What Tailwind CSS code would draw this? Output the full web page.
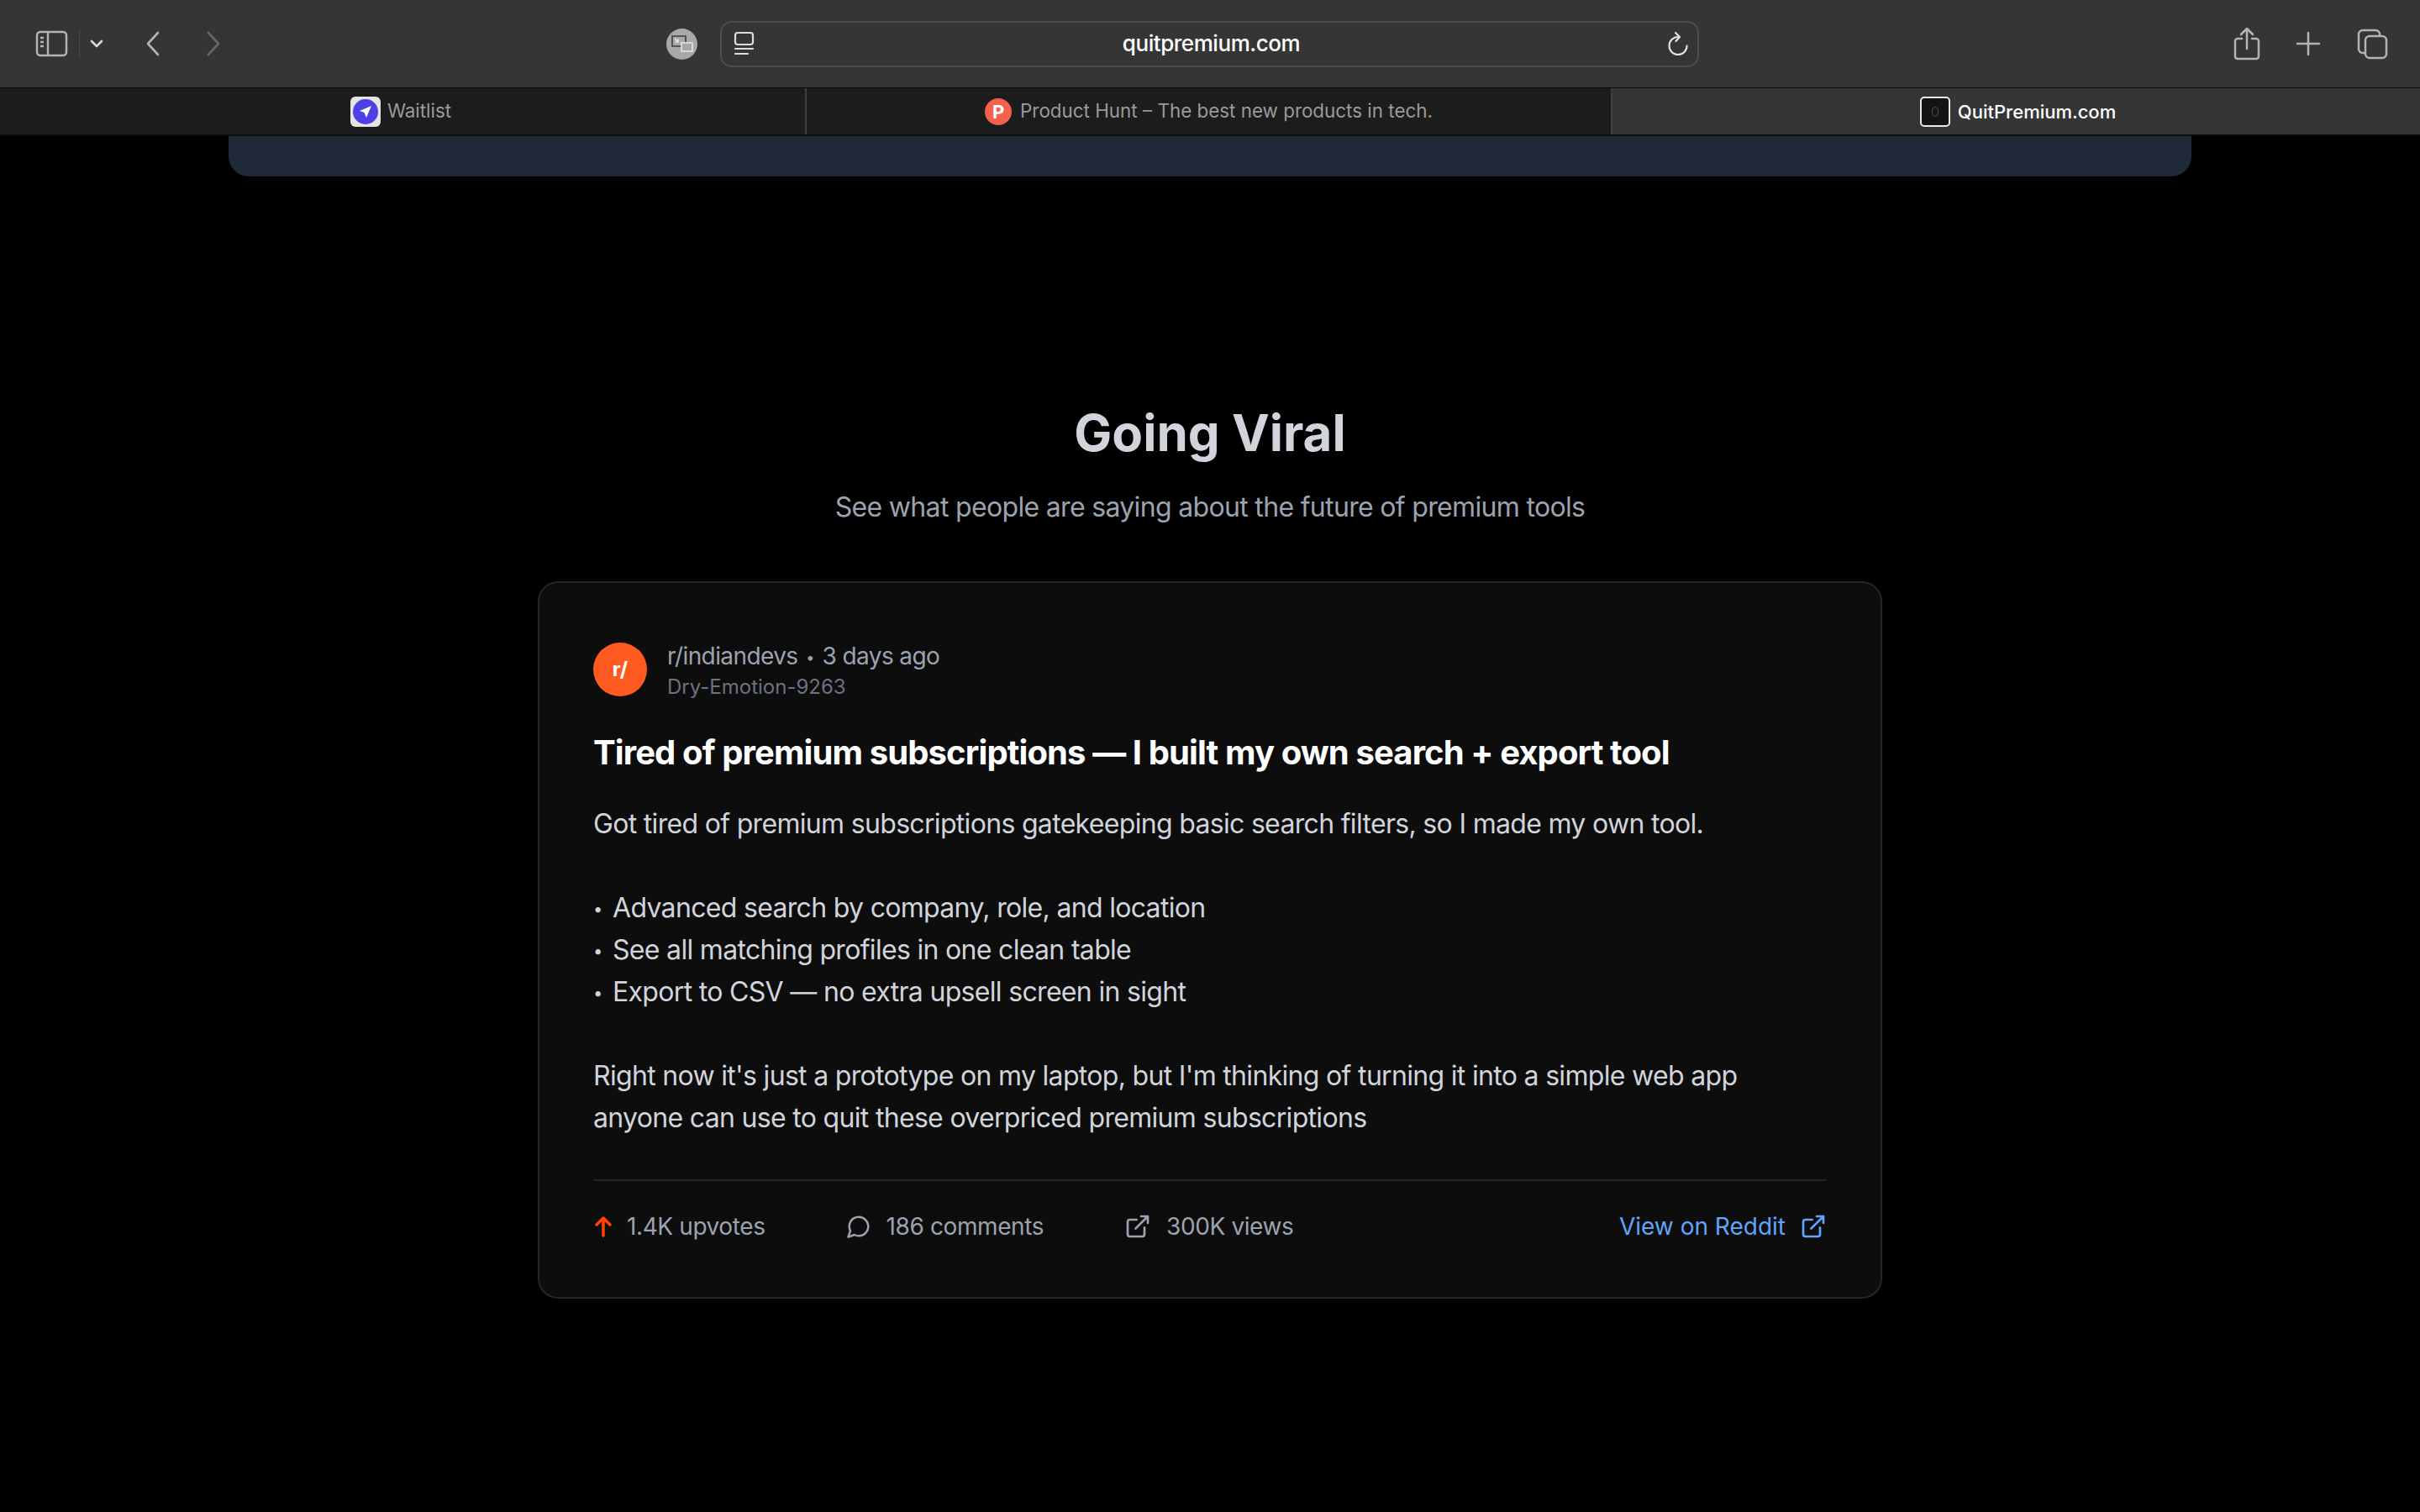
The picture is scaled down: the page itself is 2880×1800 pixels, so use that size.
<!DOCTYPE html>
<html lang="en">
<head>
    <meta charset="UTF-8">
    <meta name="viewport" content="width=device-width, initial-scale=1.0">
    <script src="https://cdn.jsdelivr.net/npm/@tailwindcss/browser@4"></script>
    <title>QuitPremium.com</title>
</head>
<body class="bg-black h-screen overflow-hidden flex flex-col [font-family:Inter,sans-serif]">

    <!-- browser toolbar -->
    <header class="h-[105px] shrink-0 bg-[#353535] border-b border-[#0c0c0c] grid grid-cols-[857px_1165px_1fr] items-center">
        <div class="flex items-center h-full pl-[42px] relative">
            <svg class="w-[39px] h-[32px]" viewBox="0 0 39 32" fill="none" stroke="#b4b4b4" stroke-width="2.5">
                <rect x="2" y="2" width="35" height="28" rx="4"/>
                <path d="M15 2v28M6 9h4M6 14h4M6 19h4"/>
            </svg>
            <div class="w-px h-[34px] bg-[#4a4a4a] ml-[13px]"></div>
            <svg class="w-[16px] h-[10px] ml-[12px]" viewBox="0 0 16 10" fill="none" stroke="#d8d8d8" stroke-width="2.6" stroke-linecap="round" stroke-linejoin="round">
                <path d="M2 2l6 6 6-6"/>
            </svg>
            <svg class="w-[18px] h-[30px] ml-[50px]" viewBox="0 0 18 30" fill="none" stroke="#b4b4b4" stroke-width="2.6" stroke-linecap="round" stroke-linejoin="round">
                <path d="M15 2L3 15l12 13"/>
            </svg>
            <svg class="w-[18px] h-[30px] ml-[54px]" viewBox="0 0 18 30" fill="none" stroke="#696969" stroke-width="2.6" stroke-linecap="round" stroke-linejoin="round">
                <path d="M3 2l12 13L3 28"/>
            </svg>
            <div class="ml-auto mr-[27px] w-[37px] h-[37px] rounded-full bg-[#a8a8a8] flex items-center justify-center">
                <svg class="w-[27px] h-[22px]" viewBox="0 0 27 22" fill="none" stroke="#3c3c3c" stroke-width="1.6">
                    <path d="M14 14H2V2h16v7"/>
                    <path d="M5 5l4 4M9 5.500V9H5.500" stroke="#e4e4e4"/>
                    <rect x="13" y="10" width="13" height="10" fill="#a8a8a8" stroke="#e4e4e4"/>
                </svg>
            </div>
        </div>

        <div class="h-[55px] rounded-[14px] border-2 border-[#4d4d4d] flex items-center pl-[14px] pr-[10px]">
            <svg class="w-[26px] h-[30px] shrink-0" viewBox="0 0 26 30" fill="none" stroke="#dcdcdc" stroke-width="2.2" stroke-linecap="round">
                <rect x="2" y="2" width="21" height="14" rx="3"/>
                <path d="M2 21h21M2 27h15"/>
            </svg>
            <span class="flex-1 text-center text-white text-[26px] tracking-[-0.45px] font-medium leading-none">quitpremium.com</span>
            <svg class="w-[26px] h-[30px] shrink-0" viewBox="0 0 26 30" fill="none" stroke="#e0e0e0" stroke-width="2.2" stroke-linecap="round" stroke-linejoin="round">
                <path d="M13 7A10.500 10.500 0 1 0 23.500 17.500"/>
                <path d="M10 2l5 5-4.500 5"/>
            </svg>
        </div>

        <div class="flex items-center justify-end pr-[38px]">
            <svg class="w-[32px] h-[40px]" viewBox="0 0 32 40" fill="none" stroke="#b4b4b4" stroke-width="2.5" stroke-linecap="round" stroke-linejoin="round">
                <path d="M10 14H5a3 3 0 0 0-3 3v18a3 3 0 0 0 3 3h22a3 3 0 0 0 3-3V17a3 3 0 0 0-3-3h-5"/>
                <path d="M16 26V3M9 9l7-7 7 7"/>
            </svg>
            <svg class="w-[30px] h-[30px] ml-[42px]" viewBox="0 0 30 30" fill="none" stroke="#b4b4b4" stroke-width="2.5" stroke-linecap="round">
                <path d="M15 2v26M2 15h26"/>
            </svg>
            <svg class="w-[37px] h-[37px] ml-[43px]" viewBox="0 0 37 37" fill="none" stroke="#b4b4b4" stroke-width="2.5">
                <path d="M9 29H7a5 5 0 0 1-5-5V7a5 5 0 0 1 5-5h15a5 5 0 0 1 5 5v2"/>
                <rect x="10" y="9" width="25" height="26" rx="5"/>
            </svg>
        </div>
    </header>

    <!-- tab bar -->
    <nav class="h-[55px] shrink-0 grid grid-cols-[960px_959px_1fr] text-[22.4px] leading-none bg-[#1c1c1c]">
        <div class="flex items-center justify-center gap-[8px] border-r-2 border-[#3f3f3f] text-[#9a9a9a] pr-[4px]">
            <div class="w-[36px] h-[36px] rounded-[6px] bg-[#e4e4e4] flex items-center justify-center">
                <div class="w-[30px] h-[30px] rounded-full bg-[#4f3fe6] flex items-center justify-center">
                    <svg class="w-[16px] h-[16px]" viewBox="0 0 16 16" fill="#ffffff"><path d="M15 1L1 7l5.500 2L9 15z"/></svg>
                </div>
            </div>
            <span>Waitlist</span>
        </div>
        <div class="flex items-center justify-center gap-[10px] border-r-2 border-[#3f3f3f] text-[#9a9a9a]">
            <div class="w-[32px] h-[32px] rounded-full bg-[#f6604f] flex items-center justify-center text-white text-[22px] font-bold">P</div>
            <span>Product Hunt – The best new products in tech.</span>
        </div>
        <div class="bg-[#353535] flex items-center justify-center gap-[9px] text-white text-[22px] font-medium pl-[4px]">
            <div class="w-[36px] h-[36px] rounded-[5px] border-2 border-[#e8e8e8] bg-[#141414] flex items-center justify-center">
                <div class="w-[8px] h-[12px] rounded-full border border-[#55503f]"></div>
            </div>
            <span>QuitPremium.com</span>
        </div>
    </nav>

    <main class="flex-1 border-t-2 border-[#0c0c0c] flex flex-col items-center overflow-hidden">
        <!-- bottom of the previous section -->
        <div class="w-[2336px] h-[48px] shrink-0 bg-[#1f2937] rounded-b-[24px]"></div>

        <h1 class="mt-[268px] text-[60px] leading-[75px] font-bold text-[#d1d5db]">Going Viral</h1>
        <p class="mt-[27px] text-[32px] leading-[48px] tracking-[-0.67px] text-[#9ca3af]">See what people are saying about the future of premium tools</p>

        <!-- reddit card -->
        <article class="mt-[64px] w-[1600px] h-[854px] shrink-0 bg-[#0d0d0e] border-2 border-[#262626] rounded-[24px] px-[64px] pt-[66px]">
            <div class="flex items-center gap-[24px]">
                <div class="w-[64px] h-[64px] rounded-full bg-[#ff5a1f] flex items-center justify-center text-white text-[24px] font-bold">r/</div>
                <div>
                    <div class="text-[28px] leading-[42px] tracking-[-0.6px] text-[#9ca3af]">r/indiandevs <span class="text-[18px] leading-none align-[2px] mx-[2.5px]">•</span> 3 days ago</div>
                    <div class="text-[24px] leading-[32px] text-[#6b7280]">Dry-Emotion-9263</div>
                </div>
            </div>

            <h2 class="mt-[32px] text-[40px] leading-[60px] tracking-[-0.89px] font-bold text-white">Tired of premium subscriptions — I built my own search + export tool</h2>

            <p class="mt-[30px] text-[32px] leading-[50px] tracking-[-0.68px] text-[#d1d5db]">
                Got tired of premium subscriptions gatekeeping basic search filters, so I made my own tool.<br><br>
                <span class="inline-block w-[23px] text-[20px] leading-none align-[3px]">•</span>Advanced search by company, role, and location<br>
                <span class="inline-block w-[23px] text-[20px] leading-none align-[3px]">•</span>See all matching profiles in one clean table<br>
                <span class="inline-block w-[23px] text-[20px] leading-none align-[3px]">•</span>Export to CSV — no extra upsell screen in sight<br><br>
                Right now it's just a prototype on my laptop, but I'm thinking of turning it into a simple web app<br>
                anyone can use to quit these overpriced premium subscriptions
            </p>

            <footer class="mt-[48px] pt-[33px] border-t-2 border-[#262626] flex items-center justify-between text-[28px] leading-[42px] text-[#9ca3af]">
                <div class="flex items-center gap-[96px] tracking-[-0.4px]">
                    <div class="flex items-center gap-[16px]">
                        <svg class="w-[24px] h-[28px]" viewBox="0 0 24 28" fill="none" stroke="#ff4500" stroke-width="3.500" stroke-linecap="round" stroke-linejoin="round">
                            <path d="M12 25V4M4 12l8-8 8 8"/>
                        </svg>
                        <span>1.4K upvotes</span>
                    </div>
                    <div class="flex items-center gap-[18px]">
                        <svg class="w-[30px] h-[30px]" viewBox="0 0 24 24" fill="none" stroke="#9ca3af" stroke-width="2" stroke-linecap="round" stroke-linejoin="round">
                            <path d="M7.900 20A9 9 0 1 0 4 16.100L2 22z"/>
                        </svg>
                        <span>186 comments</span>
                    </div>
                    <div class="flex items-center gap-[18px]">
                        <svg class="w-[32px] h-[32px]" viewBox="0 0 24 24" fill="none" stroke="#9ca3af" stroke-width="2" stroke-linecap="round" stroke-linejoin="round">
                            <path d="M18 13v6a2 2 0 0 1-2 2H5a2 2 0 0 1-2-2V8a2 2 0 0 1 2-2h6M15 3h6v6M10 14L21 3"/>
                        </svg>
                        <span>300K views</span>
                    </div>
                </div>
                <div class="flex items-center gap-[17px] text-[#60a5fa]">
                    <span>View on Reddit</span>
                    <svg class="w-[32px] h-[32px]" viewBox="0 0 24 24" fill="none" stroke="#60a5fa" stroke-width="2" stroke-linecap="round" stroke-linejoin="round">
                        <path d="M18 13v6a2 2 0 0 1-2 2H5a2 2 0 0 1-2-2V8a2 2 0 0 1 2-2h6M15 3h6v6M10 14L21 3"/>
                    </svg>
                </div>
            </footer>
        </article>
    </main>
</body>
</html>
